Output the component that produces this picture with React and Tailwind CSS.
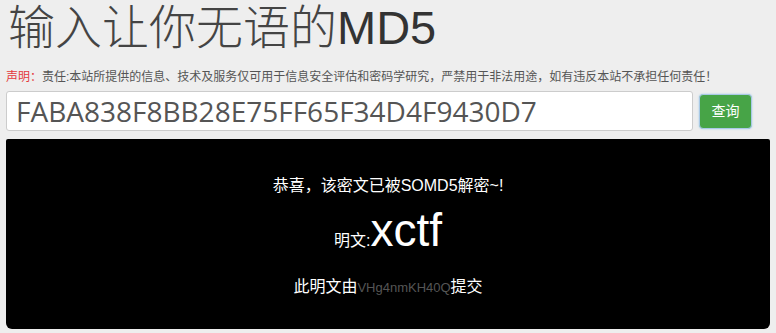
export default function App() {
  return (
    <div
      className="h-[333px] w-[776px] overflow-hidden bg-[#eeeeee] px-[6px]"
      style={{ fontFamily: '"Liberation Sans", "Noto Sans CJK SC", sans-serif' }}
    >
      {/* 标题 */}
      <h1 className="ml-[2px] pt-[2px] text-[47px] leading-[52px] text-[#333333]">
        <span className="font-light text-[#444444]">输入让你无语的</span>
        <span>MD5</span>
      </h1>

      {/* 声明 */}
      <p className="mt-[14px] text-[12px] leading-[18px] text-[#555555]">
        <span className="text-[#e4393c]">声明：</span>
        责任:本站所提供的信息、技术及服务仅可用于信息安全评估和密码学研究，严禁用于非法用途，如有违反本站不承担任何责任！
      </p>

      {/* 输入框 + 按钮 */}
      <div className="mt-[5px] flex items-center gap-[6px]">
        <input
          type="text"
          defaultValue="FABA838F8BB28E75FF65F34D4F9430D7"
          className="h-[40px] w-[687px] rounded-[3px] border border-[#cccccc] bg-white px-[9px] text-[28px] text-[#555555] outline-none"
          style={{ fontFamily: '"Open Sans", "Noto Sans", sans-serif' }}
        />
        <button
          type="button"
          className="h-[35px] w-[53px] rounded-[4px] border border-[#a9c9e6] bg-[#47a447] text-[14px] text-white shadow-[0_0_2px_#9ecaed]"
        >
          查询
        </button>
      </div>

      {/* 结果 */}
      <div className="mt-[8px] flex h-[190px] flex-col items-center rounded-b-[6px] rounded-t-[2px] bg-black pt-[35px] text-white">
        <div className="text-[16px] leading-[24px]">恭喜，该密文已被SOMD5解密~!</div>
        <div className="mt-[6px] flex items-baseline leading-[52px]">
          <span className="text-[16px]">明文:</span>
          <span className="text-[46px]">xctf</span>
        </div>
        <div className="mt-[8px] text-[16px] leading-[24px]">
          此明文由<span className="text-[13px] text-[#555555]">VHg4nmKH40Q</span>提交
        </div>
      </div>
    </div>
  );
}
